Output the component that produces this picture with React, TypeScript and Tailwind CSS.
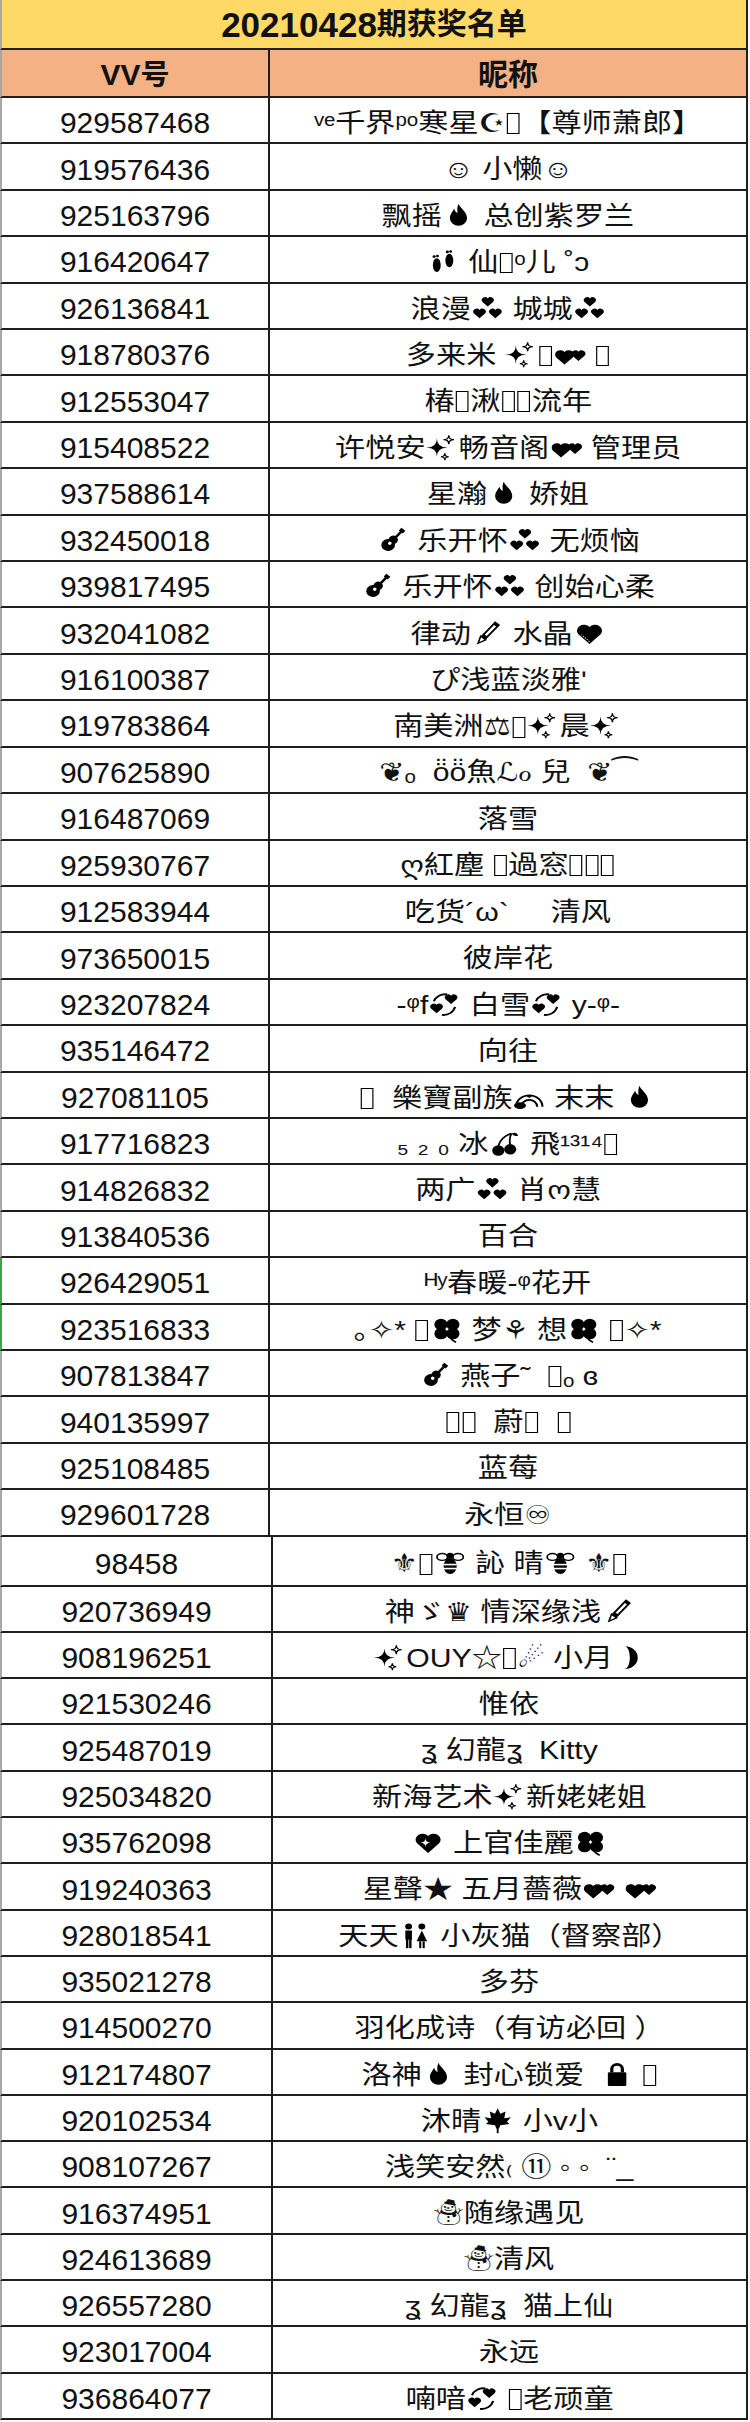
import { Fragment, type ReactNode } from "react";

// small black glyphs that the sheet shows for emoji
const ico = "inline-block w-[1.1em] h-[1.05em] align-[-0.16em]";

const heartD = "M12 21 L3.6 12.6 A4.8 4.8 0 0 1 12 6.2 A4.8 4.8 0 0 1 20.4 12.6 Z";

function Svg({ children }: { children: ReactNode }) {
	return (
		<svg viewBox="0 0 24 24" className={ico} fill="black">
			{children}
		</svg>
	);
}

function star4(cx: number, cy: number, r: number) {
	return `M${cx} ${cy - r} Q${cx} ${cy} ${cx + r} ${cy} Q${cx} ${cy} ${cx} ${cy + r} Q${cx} ${cy} ${cx - r} ${cy} Q${cx} ${cy} ${cx} ${cy - r} Z`;
}

const ICONS: Record<string, () => ReactNode> = {
	flame: () => (
		<Svg>
			<path d="M12 1.5c1.2 4 6.5 6.8 6.5 12.8a6.5 6.5 0 0 1-13 0c0-3.6 2.2-5.8 3.2-8.3.5 2 1.4 3.2 2.6 3.6C11 6.8 11 4 12 1.5z" />
		</Svg>
	),
	heart: () => (
		<Svg>
			<path d={heartD} />
			<path d="M12 19 L6 13" stroke="white" strokeWidth="0.8" strokeDasharray="1 1" />
		</Svg>
	),
	hstar: () => (
		<Svg>
			<path d={heartD} />
			<path d={star4(10, 12, 4)} fill="white" />
		</Svg>
	),
	h3: () => (
		<Svg>
			<g transform="translate(6.5 0) scale(0.48)">
				<path d={heartD} />
			</g>
			<g transform="translate(0 10) scale(0.5)">
				<path d={heartD} />
			</g>
			<g transform="translate(12 10) scale(0.5)">
				<path d={heartD} />
			</g>
		</Svg>
	),
	h2: () => (
		<Svg>
			<g transform="translate(-1 5) scale(0.75)">
				<path d={heartD} />
			</g>
			<g transform="translate(12 6) scale(0.55)">
				<path d={heartD} />
			</g>
		</Svg>
	),
	swirl: () => (
		<Svg>
			<g transform="translate(0 9) scale(0.5)">
				<path d={heartD} />
			</g>
			<g transform="translate(11 1) scale(0.5)">
				<path d={heartD} />
			</g>
			<path d="M4 9 A9 9 0 0 1 14 3 M20 14 A9 9 0 0 1 10 21" stroke="black" strokeWidth="1.6" fill="none" />
		</Svg>
	),
	sp: () => (
		<Svg>
			<path d={star4(8, 12, 8)} />
			<path d={star4(17, 5, 4)} fill="none" stroke="black" strokeWidth="1" />
			<path d={star4(14, 20, 3)} fill="none" stroke="black" strokeWidth="1" />
		</Svg>
	),
	gt: () => (
		<Svg>
			<g transform="rotate(40 12 12)">
				<circle cx="12" cy="17" r="5.2" />
				<circle cx="12" cy="11" r="3.6" />
				<rect x="11" y="0" width="2" height="10" />
				<rect x="10" y="-1" width="4" height="3" />
				<circle cx="12" cy="15" r="1.4" fill="white" />
			</g>
		</Svg>
	),
	pen: () => (
		<Svg>
			<g transform="rotate(40 12 12)">
				<rect x="9.5" y="0" width="5" height="17" />
				<path d="M9.5 17 L14.5 17 L12 23 Z" fill="none" stroke="black" strokeWidth="1.2" />
				<rect x="11" y="3" width="2" height="11" fill="white" />
			</g>
		</Svg>
	),
	lock: () => (
		<Svg>
			<rect x="5" y="10" width="14" height="12" rx="1" />
			<path d="M8 10V7a4 4 0 0 1 8 0v3" stroke="black" strokeWidth="2.4" fill="none" />
		</Svg>
	),
	maple: () => (
		<Svg>
			<polygon points="12,1 14,6 18,4 17,10 22,9 19,13 21,15 14,16 13,19 11,19 10,16 3,15 5,13 2,9 7,10 6,4 10,6" />
			<rect x="11.3" y="16" width="1.4" height="7" />
		</Svg>
	),
	cherry: () => (
		<Svg>
			<circle cx="7" cy="18" r="4.6" />
			<circle cx="16" cy="17" r="4.6" />
			<path d="M7 14 Q9 6 17 3 M16 13 Q15 7 17 3" stroke="black" strokeWidth="1.4" fill="none" />
			<path d="M17 3 Q21 1 22 5 Q19 6 17 3 Z" />
		</Svg>
	),
	clover: () => (
		<Svg>
			<circle cx="7.5" cy="7.5" r="5" />
			<circle cx="16.5" cy="7.5" r="5" />
			<circle cx="7.5" cy="15.5" r="5" />
			<circle cx="16.5" cy="15.5" r="5" />
			<path d="M14 18 Q16 22 19 23" stroke="black" strokeWidth="1.4" fill="none" />
		</Svg>
	),
	foot: () => (
		<Svg>
			<ellipse cx="7" cy="15" rx="3" ry="6" />
			<circle cx="5" cy="7.5" r="1.2" />
			<circle cx="7.5" cy="7" r="1.1" />
			<ellipse cx="16.5" cy="11" rx="3" ry="6" />
			<circle cx="15" cy="3.5" r="1.2" />
			<circle cx="17.5" cy="3" r="1.1" />
		</Svg>
	),
	couple: () => (
		<Svg>
			<circle cx="7" cy="4" r="2.6" />
			<circle cx="17" cy="4" r="2.6" />
			<rect x="4.5" y="7.5" width="5" height="8" />
			<rect x="5" y="15" width="1.8" height="8" />
			<rect x="7.4" y="15" width="1.8" height="8" />
			<path d="M17 7.5 L21 17 L13 17 Z" />
			<rect x="15" y="17" width="1.6" height="6" />
			<rect x="17.6" y="17" width="1.6" height="6" />
		</Svg>
	),
	rain: () => (
		<Svg>
			<path d="M2 20 A10 10 0 0 1 22 20" stroke="black" strokeWidth="1.6" fill="none" />
			<path d="M6 20 A6 6 0 0 1 18 20" stroke="black" strokeWidth="1.6" fill="none" />
			<ellipse cx="5" cy="19" rx="4.5" ry="3" />
			<ellipse cx="12" cy="11" rx="1.6" ry="1" />
		</Svg>
	),
	bee: () => (
		<Svg>
			<ellipse cx="12" cy="15" rx="5" ry="7" />
			<rect x="7" y="13" width="10" height="1.4" fill="white" />
			<rect x="7" y="16.5" width="10" height="1.4" fill="white" />
			<ellipse cx="6" cy="7" rx="4" ry="3" fill="none" stroke="black" strokeWidth="1.3" />
			<ellipse cx="18" cy="7" rx="4" ry="3" fill="none" stroke="black" strokeWidth="1.3" />
			<circle cx="12" cy="6" r="2.6" />
		</Svg>
	),
	moon: () => (
		<Svg>
			<path d="M8 2 A10 10 0 1 1 8 22 A4 10 0 0 0 8 2 Z" />
		</Svg>
	),
	box: () => <span className="inline-block w-[0.42em] h-[0.8em] border-[1.5px] border-black align-[-0.08em] mx-[0.05em]" />,
};

function renderName(s: string) {
	const parts = s.split(/\{(\w+)\}/);
	return parts.map((p, i) => <Fragment key={i}>{i % 2 ? ICONS[p]() : p}</Fragment>);
}

const upper: [string, string][] = [
	["929587468", "ᵛᵉ千界ᵖᵒ寒星☪{box}【尊师萧郎】"],
	["919576436", "☺ 小懒☺"],
	["925163796", "飘摇{flame} 总创紫罗兰"],
	["916420647", "{foot} 仙{box}ᵒ儿 ˚ↄ"],
	["926136841", "浪漫{h3} 城城{h3}"],
	["918780376", "多来米 {sp}{box}{h2} {box}"],
	["912553047", "椿{box}湫{box}{box}流年"],
	["915408522", "许悦安{sp}畅音阁{h2} 管理员"],
	["937588614", "星瀚{flame} 娇姐"],
	["932450018", "{gt} 乐开怀{h3} 无烦恼"],
	["939817495", "{gt} 乐开怀{h3} 创始心柔"],
	["932041082", "律动{pen} 水晶{heart}"],
	["916100387", "ぴ浅蓝淡雅ʹ"],
	["919783864", "南美洲⚖{box}{sp}晨{sp}"],
	["907625890", "❦ₒ  ö̈ö̈魚ℒℴ 兒  ❦⁀"],
	["916487069", "落雪"],
	["925930767", "ღ紅塵 {box}過窓{box}{box}{box}"],
	["912583944", "吃货´ω`     清风"],
	["973650015", "彼岸花"],
	["923207824", "-ᵠf{swirl} 白雪{swirl} y-ᵠ-"],
	["935146472", "向往"],
	["927081105", "{box}  樂寶副族{rain} 末末 {flame}"],
	["917716823", "₅ ₂ ₀ 冰{cherry} 飛¹³¹⁴{box}"],
	["914826832", "两广{h3} 肖ო慧"],
	["913840536", "百合"],
	["926429051", "ᴴʸ春暖-ᵠ花开"],
	["923516833", "｡✧* {box}{clover} 梦⚘ 想{clover} {box}✧*"],
	["907813847", "{gt} 燕子˜  {box}ₒ ɞ"],
	["940135997", "{box}{box}  蔚{box}  {box}"],
	["925108485", "蓝莓"],
	["929601728", "永恒♾"],
];

const lower: [string, string][] = [
	["920736949", "神ゞ♛ 情深缘浅{pen}"],
	["908196251", "{sp}OUY☆{box}☄ 小月{moon}"],
	["921530246", "惟依"],
	["925487019", "ʓ 幻龍ʓ  Kitty"],
	["925034820", "新海艺术{sp}新姥姥姐"],
	["935762098", "{hstar} 上官佳麗{clover}"],
	["919240363", "星聲★ 五月薔薇{h2} {h2}"],
	["928018541", "天天{couple} 小灰猫（督察部）"],
	["935021278", "多芬"],
	["914500270", "羽化成诗（有访必回 ）"],
	["912174807", "洛神{flame} 封心锁爱  {lock} {box}"],
	["920102534", "沐晴{maple} 小v小"],
	["908107267", "浅笑安然₍ ⑪ ◦ ◦  ¨_"],
	["916374951", "☃随缘遇见"],
	["924613689", "☃清风"],
	["926557280", "ʓ 幻龍ʓ  猫上仙"],
	["923017004", "永远"],
	["936864077", "喃喑{swirl} {box}老顽童"],
];

function Row({ id, name, tall, shifted, green }: { id: string; name: string; tall?: boolean; shifted?: boolean; green?: boolean }) {
	return (
		<div
			className={`flex border-b-2 border-b-[#1e1e1e] border-l-2 ${green ? "border-l-[#3aa449]" : "border-l-[#a8a8a8]"} ${
				tall ? "h-[50px]" : shifted ? "h-[46.3px]" : "h-[46.42px]"
			}`}
		>
			<div
				className={`${shifted ? "w-[271px]" : "w-[268px]"} shrink-0 border-r-2 border-[#1e1e1e] flex items-center justify-center pt-[6px] text-[30px] leading-none`}
			>
				{id}
			</div>
			<div className="flex-1 border-r-2 border-[#1e1e1e] flex items-center justify-center pt-[5px] overflow-hidden">
				<span className="inline-block scale-x-[1.16] text-[26px] leading-none whitespace-pre">{renderName(name)}</span>
			</div>
		</div>
	);
}

export default function App() {
	return (
		<div className="w-[750px] bg-white text-[#111] font-['Liberation_Sans','Noto_Sans_CJK_SC','DejaVu_Sans',sans-serif]">
			<div className="w-[748px]">
				<div className="h-[50px] flex items-center justify-center bg-[#ffd966] border-b-2 border-b-[#1e1e1e] border-l-2 border-l-[#a8a8a8] border-r-2 border-r-[#1e1e1e] font-bold">
					<span className="text-[35px] leading-none">20210428</span>
					<span className="text-[30px] leading-none">期获奖名单</span>
				</div>
				<div className="h-[48px] flex bg-[#f4b183] border-b-2 border-b-[#1e1e1e] border-l-2 border-l-[#a8a8a8]">
					<div className="w-[268px] shrink-0 border-r-2 border-[#1e1e1e] flex items-center justify-center pt-[4px] font-bold">
						<span className="text-[30px] leading-none">VV</span>
						<span className="text-[29px] leading-none">号</span>
					</div>
					<div className="flex-1 border-r-2 border-[#1e1e1e] flex items-center justify-center pt-[4px] text-[30px] leading-none font-bold">
						昵称
					</div>
				</div>
				{upper.map(([id, name], i) => (
					<Row key={id} id={id} name={name} green={i === 25 || i === 26} />
				))}
				<Row id="98458" name="⚜{box}{bee} 訫 晴{bee} ⚜{box}" tall shifted />
				{lower.map(([id, name]) => (
					<Row key={id} id={id} name={name} shifted />
				))}
			</div>
		</div>
	);
}
